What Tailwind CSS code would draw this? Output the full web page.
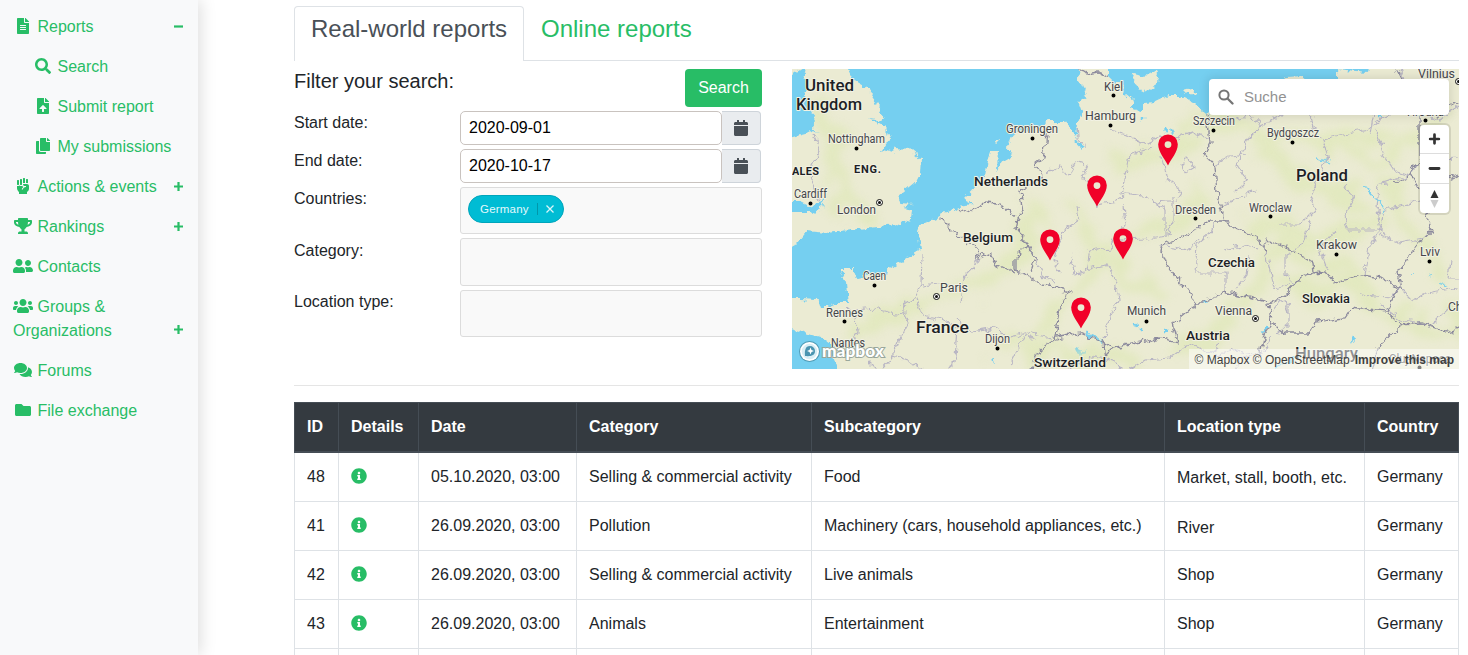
<!DOCTYPE html>
<html lang="en">
<head>
<meta charset="utf-8">
<title>Reports</title>
<script src="https://cdn.jsdelivr.net/npm/@tailwindcss/browser@4"></script>
</head>
<body class="h-[655px] overflow-hidden bg-white font-['Liberation_Sans',Arial,sans-serif] text-base text-[#212529]">
<svg class="absolute size-0">
  <symbol id="file" viewBox="0 0 384 512"><path d="M224 136V0H24C10.7 0 0 10.7 0 24v464c0 13.3 10.7 24 24 24h336c13.3 0 24-10.7 24-24V160H248c-13.2 0-24-10.8-24-24zm64 236c0 6.6-5.4 12-12 12H108c-6.6 0-12-5.4-12-12v-8c0-6.6 5.4-12 12-12h168c6.6 0 12 5.4 12 12v8zm0-64c0 6.6-5.4 12-12 12H108c-6.6 0-12-5.4-12-12v-8c0-6.6 5.4-12 12-12h168c6.6 0 12 5.4 12 12v8zm0-72v8c0 6.6-5.4 12-12 12H108c-6.6 0-12-5.4-12-12v-8c0-6.6 5.4-12 12-12h168c6.6 0 12 5.4 12 12zm96-114.1v6.1H256V0h6.1c6.4 0 12.5 2.5 17 7l97.9 98c4.5 4.5 7 10.6 7 16.9z"/></symbol>
  <symbol id="search" viewBox="0 0 512 512"><path d="M505 442.7L405.3 343c-4.5-4.5-10.6-7-17-7H372c27.6-35.3 44-79.7 44-128C416 93.1 322.9 0 208 0S0 93.1 0 208s93.1 208 208 208c48.3 0 92.7-16.4 128-44v16.3c0 6.4 2.5 12.5 7 17l99.7 99.7c9.4 9.4 24.6 9.4 33.9 0l28.3-28.3c9.4-9.4 9.4-24.6.1-34zM208 336c-70.7 0-128-57.2-128-128 0-70.7 57.2-128 128-128 70.7 0 128 57.2 128 128 0 70.7-57.2 128-128 128z"/></symbol>
  <symbol id="upload" viewBox="0 0 384 512"><path d="M224 136V0H24C10.7 0 0 10.7 0 24v464c0 13.3 10.7 24 24 24h336c13.3 0 24-10.7 24-24V160H248c-13.2 0-24-10.8-24-24zm65.18 216.01H224v80c0 8.84-7.16 16-16 16h-32c-8.84 0-16-7.16-16-16v-80H94.82c-14.28 0-21.41-17.29-11.27-27.36l96.42-95.7c6.65-6.61 17.39-6.61 24.04 0l96.42 95.7c10.15 10.07 3.03 27.36-11.25 27.36zM377 105L279.1 7c-4.5-4.5-10.6-7-17-7H256v128h128v-6.1c0-6.3-2.5-12.4-7-16.9z"/></symbol>
  <symbol id="copy" viewBox="0 0 448 512"><path d="M320 448v40c0 13.255-10.745 24-24 24H24c-13.255 0-24-10.745-24-24V120c0-13.255 10.745-24 24-24h72v296c0 30.879 25.121 56 56 56h168zm0-344V0H152c-13.255 0-24 10.745-24 24v368c0 13.255 10.745 24 24 24h272c13.255 0 24-10.745 24-24V128H344c-13.2 0-24-10.8-24-24zm120.971-31.029L375.029 7.029A24 24 0 0 0 358.059 0H352v96h96v-6.059a24 24 0 0 0-7.029-16.97z"/></symbol>
  <symbol id="fist" viewBox="0 0 384 512"><path d="M255.98 160V16c0-8.84-7.16-16-16-16h-32c-8.84 0-16 7.16-16 16v146.93c5.02-1.78 10.34-2.93 15.97-2.93h48.03zm128 95.99c-.01-35.34-28.66-63.99-63.99-63.99H207.85c-8.78 0-15.9 7.07-15.9 15.85v.56c0 26.27 21.3 47.59 47.57 47.59h35.26c9.68 0 13.2 3.58 13.2 8v16.2c0 4.29-3.59 7.78-7.88 8-44.52 2.28-64.16 24.71-96.05 72.55l-6.31 9.47a7.994 7.994 0 0 1-11.09 2.22l-13.31-8.88a7.994 7.994 0 0 1-2.22-11.09l6.31-9.47c15.73-23.6 30.2-43.26 47.31-58.08-17.27-5.51-31.4-18.12-38.87-34.45-6.59 3.41-13.96 5.52-21.87 5.52h-32c-12.34 0-23.49-4.81-32-12.48C71.48 251.19 60.33 256 48 256H16c-5.64 0-10.97-1.15-16-2.95v77.93c0 33.95 13.48 66.5 37.49 90.51L63.99 448v64h255.98v-63.96l35.91-35.92A96.035 96.035 0 0 0 384 344.21l-.02-88.22zm-32.01-90.09V48c0-8.84-7.16-16-16-16h-32c-8.84 0-16 7.16-16 16v112h32c11.28 0 21.94 2.31 32 5.9zM16 224h32c8.84 0 16-7.16 16-16V80c0-8.84-7.16-16-16-16H16C7.16 64 0 71.16 0 80v128c0 8.84 7.16 16 16 16zm95.99 0h32c8.84 0 16-7.16 16-16V48c0-8.84-7.16-16-16-16h-32c-8.84 0-16 7.16-16 16v160c0 8.84 7.16 16 16 16z"/></symbol>
  <symbol id="trophy" viewBox="0 0 576 512"><path d="M552 64H448V24c0-13.3-10.7-24-24-24H152c-13.3 0-24 10.7-24 24v40H24C10.7 64 0 74.7 0 88v56c0 35.7 22.5 72.4 61.9 100.7 31.5 22.7 69.8 37.1 110 41.7C203.3 338.5 240 360 240 360v72h-48c-35.3 0-64 20.7-64 56v12c0 6.6 5.4 12 12 12h296c6.6 0 12-5.4 12-12v-12c0-35.3-28.7-56-64-56h-48v-72s36.7-21.5 68.1-73.6c40.3-4.6 78.6-19 110-41.7 39.3-28.3 61.9-65 61.9-100.7V88c0-13.3-10.7-24-24-24zM99.3 192.8C74.9 175.2 64 155.6 64 144v-16h64.2c1 32.6 5.8 61.2 12.8 86.2-15.1-5.2-29.2-12.4-41.7-21.4zM512 144c0 16.1-17.7 36.1-35.3 48.8-12.5 9-26.7 16.2-41.8 21.4 7-25 11.8-53.6 12.8-86.2H512v16z"/></symbol>
  <symbol id="friends" viewBox="0 0 640 512"><path d="M192 256c61.9 0 112-50.1 112-112S253.9 32 192 32 80 82.1 80 144s50.1 112 112 112zm76.8 32h-8.3c-20.8 10-43.9 16-68.5 16s-47.6-6-68.5-16h-8.3C51.6 288 0 339.6 0 403.2V432c0 26.5 21.5 48 48 48h288c26.5 0 48-21.5 48-48v-28.8c0-63.6-51.6-115.2-115.2-115.2zM480 256c53 0 96-43 96-96s-43-96-96-96-96 43-96 96 43 96 96 96zm48 32h-3.8c-13.9 4.8-28.6 8-44.2 8s-30.3-3.2-44.2-8H432c-20.4 0-39.2 5.9-55.7 15.4 24.4 26.3 39.7 61.2 39.7 99.8v38.4c0 2.2-.5 4.3-.6 6.4H592c26.5 0 48-21.5 48-48 0-61.9-50.1-112-112-112z"/></symbol>
  <symbol id="users" viewBox="0 0 640 512"><path d="M96 224c35.3 0 64-28.7 64-64s-28.7-64-64-64-64 28.7-64 64 28.7 64 64 64zm448 0c35.3 0 64-28.7 64-64s-28.7-64-64-64-64 28.7-64 64 28.7 64 64 64zm32 32h-64c-17.6 0-33.5 7.1-45.1 18.6 40.3 22.1 68.9 62 75.1 109.4h66c17.7 0 32-14.3 32-32v-32c0-35.3-28.7-64-64-64zm-256 0c61.9 0 112-50.1 112-112S381.9 32 320 32 208 82.1 208 144s50.1 112 112 112zm76.8 32h-8.3c-20.8 10-43.9 16-68.5 16s-47.6-6-68.5-16h-8.3C179.6 288 128 339.6 128 403.2V432c0 26.5 21.5 48 48 48h288c26.5 0 48-21.5 48-48v-28.8c0-63.6-51.6-115.2-115.2-115.2zm-223.7-13.4C161.5 263.1 145.6 256 128 256H64c-35.3 0-64 28.7-64 64v32c0 17.7 14.3 32 32 32h65.9c6.3-47.4 34.9-87.3 75.2-109.4z"/></symbol>
  <symbol id="comments" viewBox="0 0 576 512"><path d="M416 192c0-88.4-93.1-160-208-160S0 103.6 0 192c0 34.3 14.1 65.9 38 92-13.4 30.2-35.5 54.2-35.8 54.5-2.2 2.3-2.8 5.7-1.5 8.7S4.8 352 8 352c36.6 0 66.9-12.3 88.7-25 32.2 15.7 70.3 25 111.3 25 114.9 0 208-71.6 208-160zm122 220c23.9-26 38-57.7 38-92 0-66.9-53.5-124.2-129.3-148.1.9 6.6 1.3 13.3 1.3 20.1 0 105.9-107.7 192-240 192-10.8 0-21.3-.8-31.7-1.9C207.8 439.6 281.8 480 368 480c41 0 79.1-9.2 111.3-25 21.8 12.7 52.1 25 88.7 25 3.2 0 6.1-1.9 7.3-4.8 1.3-2.9.7-6.3-1.5-8.7-.3-.3-22.4-24.2-35.8-54.5z"/></symbol>
  <symbol id="folder" viewBox="0 0 512 512"><path d="M464 128H272l-64-64H48C21.49 64 0 85.49 0 112v288c0 26.51 21.49 48 48 48h416c26.51 0 48-21.49 48-48V176c0-26.51-21.49-48-48-48z"/></symbol>
  <symbol id="calendar" viewBox="0 0 448 512"><path d="M12 192h424c6.6 0 12 5.4 12 12v260c0 26.5-21.5 48-48 48H48c-26.5 0-48-21.5-48-48V204c0-6.6 5.4-12 12-12zm436-44v-36c0-26.5-21.5-48-48-48h-48V12c0-6.6-5.4-12-12-12h-40c-6.6 0-12 5.4-12 12v52H160V12c0-6.6-5.4-12-12-12h-40c-6.6 0-12 5.4-12 12v52H48C21.5 64 0 85.5 0 112v36c0 6.6 5.4 12 12 12h424c6.6 0 12-5.4 12-12z"/></symbol>
  <symbol id="info" viewBox="0 0 512 512"><path d="M256 8C119.043 8 8 119.083 8 256c0 136.997 111.043 248 248 248s248-111.003 248-248C504 119.083 392.957 8 256 8zm0 110c23.196 0 42 18.804 42 42s-18.804 42-42 42-42-18.804-42-42 18.804-42 42-42zm56 254c0 6.627-5.373 12-12 12h-88c-6.627 0-12-5.373-12-12v-24c0-6.627 5.373-12 12-12h12v-64h-12c-6.627 0-12-5.373-12-12v-24c0-6.627 5.373-12 12-12h64c6.627 0 12 5.373 12 12v100h12c6.627 0 12 5.373 12 12v24z"/></symbol>
  <symbol id="plus" viewBox="0 0 9 9"><path d="M3.400 0h2.200v3.400H9v2.200H5.600V9H3.400V5.600H0V3.400h3.400z"/></symbol>
  <symbol id="minus" viewBox="0 0 9 9"><path d="M0 3.400h9v2.200H0z"/></symbol>
</svg>

<div class="flex h-full overflow-hidden">
  <aside class="w-[198px] shrink-0 bg-[#f8f9fa] pt-[7px] text-[#28bd66] shadow-[3px_0_15px_rgba(0,0,0,0.13)]">
    <nav class="[&_a]:flex [&_a]:items-center [&_a]:px-[13px] [&_a]:py-2 [&_a]:leading-6 [&_a>svg]:mb-0.5 [&_a>svg:first-child]:mr-[4.5px] [&_a>svg:first-child]:h-4 [&_a>svg:first-child]:w-5 [&_svg]:fill-current">
      <a><svg><use href="#file"/></svg>Reports<svg class="ml-auto mr-0.5 size-[9px]"><use href="#minus"/></svg></a>
      <div class="pl-5">
        <a><svg><use href="#search"/></svg>Search</a>
        <a><svg><use href="#upload"/></svg>Submit report</a>
        <a><svg><use href="#copy"/></svg><span class="whitespace-nowrap">My submissions</span></a>
      </div>
      <a><svg><use href="#fist"/></svg>Actions &amp; events<svg class="ml-auto mr-0.5 size-[9px]"><use href="#plus"/></svg></a>
      <a><svg><use href="#trophy"/></svg>Rankings<svg class="ml-auto mr-0.5 size-[9px]"><use href="#plus"/></svg></a>
      <a><svg><use href="#friends"/></svg>Contacts</a>
      <div class="flex items-end px-[13px] py-2 leading-6">
        <span class="w-[120px]"><svg class="-mt-1 mr-[4.5px] inline h-4 w-5"><use href="#users"/></svg>Groups &amp; Organizations</span>
        <svg class="mb-[9px] ml-auto mr-0.5 size-[9px]"><use href="#plus"/></svg>
      </div>
      <a><svg><use href="#comments"/></svg>Forums</a>
      <a><svg><use href="#folder"/></svg>File exchange</a>
    </nav>
  </aside>

  <main class="ml-24 w-[1165px] shrink-0 pt-1.5">
    <div class="flex h-[55px] border-b border-[#dee2e6] text-2xl leading-[29px]">
      <div class="-mb-px w-[230px] whitespace-nowrap rounded-t border border-b-0 border-[#dee2e6] bg-white pl-4 pt-[7px] text-[#495057]">Real-world reports</div>
      <div class="px-[17px] py-2 text-[#28bd66]">Online reports</div>
    </div>

    <div class="mt-2 flex h-[300px] justify-between">
      <form class="w-[468px]">
        <div class="flex h-[42px] justify-between">
          <h5 class="text-xl leading-6">Filter your search:</h5>
          <button type="button" class="h-[38px] w-[77px] rounded bg-[#28bd66] text-white">Search</button>
        </div>
        <div class="flex h-[38px] justify-between">
          <label class="leading-6">Start date:</label>
          <div class="flex h-[34px] w-[302px]">
            <div class="w-[262px] rounded-[5px] border border-[#c9c3bf] bg-white pl-2 leading-8 text-black">2020-09-01</div>
            <div class="flex w-[39px] items-center justify-center rounded-r border border-l-0 border-[#ced4da] bg-[#e9ecef]"><svg class="h-4 w-3.5 fill-[#495057]"><use href="#calendar"/></svg></div>
          </div>
        </div>
        <div class="flex h-[38px] justify-between">
          <label class="leading-6">End date:</label>
          <div class="flex h-[34px] w-[302px]">
            <div class="w-[262px] rounded-[5px] border border-[#c9c3bf] bg-white pl-2 leading-8 text-black">2020-10-17</div>
            <div class="flex w-[39px] items-center justify-center rounded-r border border-l-0 border-[#ced4da] bg-[#e9ecef]"><svg class="h-4 w-3.5 fill-[#495057]"><use href="#calendar"/></svg></div>
          </div>
        </div>
        <div class="flex h-[51px] justify-between">
          <label class="leading-6">Countries:</label>
          <div class="h-[47px] w-[302px] rounded-[3px] border border-[#dcdcdc] bg-[#f9f9f9] p-[7px]">
            <div class="flex h-7 w-24 items-center rounded-full border border-[#00a5bb] bg-[#00bcd4] pl-[11px] text-[11.5px] text-[#e3f9fc]"><span class="w-[50px] pt-px tracking-[0.2px]">Germany</span><span class="ml-[7px] h-3 w-px bg-[#0097aa]"></span><svg class="ml-2 size-2" viewBox="0 0 8 8" stroke="#d8f5f9" stroke-width="1.3"><path d="M.5.5l7 7M7.500.5l-7 7"/></svg></div>
          </div>
        </div>
        <div class="flex h-[52px] justify-between">
          <label class="pt-px leading-6">Category:</label>
          <div class="h-12 w-[302px] rounded-[3px] border border-[#dcdcdc] bg-[#f9f9f9]"></div>
        </div>
        <div class="flex justify-between">
          <label class="leading-6">Location type:</label>
          <div class="h-[47px] w-[302px] rounded-[3px] border border-[#dcdcdc] bg-[#f9f9f9]"></div>
        </div>
      </form>

      <div class="relative h-[300px] w-[667px] overflow-hidden bg-[#75cff0]">
        <svg class="block h-[300px] w-[667px]" viewBox="792 69 667 300">
          <defs>
            <filter id="rough" x="780" y="55" width="690" height="330" filterUnits="userSpaceOnUse" color-interpolation-filters="sRGB"><feTurbulence type="fractalNoise" baseFrequency="0.13" numOctaves="3" seed="4"/><feDisplacementMap in="SourceGraphic" scale="9" xChannelSelector="R" yChannelSelector="G"/></filter>
            <filter id="soft" x="780" y="55" width="690" height="330" filterUnits="userSpaceOnUse" color-interpolation-filters="sRGB"><feTurbulence type="fractalNoise" baseFrequency="0.03" numOctaves="3" seed="9"/><feDisplacementMap in="SourceGraphic" scale="50" xChannelSelector="R" yChannelSelector="G" result="d"/><feGaussianBlur in="d" stdDeviation="4"/></filter>
            <clipPath id="land"><use href="#britain"/><use href="#continent"/></clipPath>
          </defs>
          <g filter="url(#rough)">
            <g fill="#ebebd3">
              <path id="britain" d="M785 60L848 60 848 69 853 80 867 88 875 100 879 110 884 121 870 119 880 124 888 132 890 139 883 150 893 153 896 148 910 149 921 158 920 173 915 183 898 197 901 203 913 204 903 207 914 209 913 219 897 225 868 228 850 230 828 233 807 231 800 240 795 247 785 245 785 213 812 213 822 207 825 197 820 202 810 207 800 202 785 202 785 138 812 131 818 135 813 130 815 115 805 95 807 83 802 80 806 66 785 80Z"/>
              <path id="continent" d="M780 298L800 298 817 299 820 308 828 308 835 303 849 303 847 283 840 268 853 268 857 278 875 274 887 277 888 270 908 257 920 250 918 235 920 225 937 218 948 212 958 207 975 205 963 199 967 195 978 182 985 177 988 160 992 149 998 149 997 170 1003 162 1012 157 1007 146 1015 134 1030 129 1047 122 1065 122 1073 132 1076 140 1077 123 1082 113 1078 102 1087 97 1080 80 1075 55 1108 55 1108 77 1125 93 1133 100 1130 108 1143 112 1143 103 1153 102 1168 95 1180 95 1193 102 1207 115 1222 104 1250 88 1287 77 1302 76 1310 83 1337 83 1337 70 1367 73 1370 55 1470 55 1470 380 840 380 833 358 838 350 833 345 822 338 802 332 780 326Z"/>
              <path d="M1133 74l8 2 9-1 8-5 2 4-5 12-8 6-8-4-7-8zM1183 90l8-2 5 6-7 2zM1116 82l7 3-2 6-6-4zM995 142l5-3-1 4z"/>
            </g>
            <g fill="none" stroke="#75cff0" stroke-width="2.500">
              <path d="M1165 128l2 3M1171 130l2 3M1143 118v3M1136 323l1 4M1141 328v4M1165 331h3M1203 302l4 2M1266 327l-3 6M1354 337l-3 6M1377 117h4M1077 142l7 6"/>
              <path stroke-width="3" d="M1087 334l8 3 7 6M1077 348l3 5 6-1"/>
              <path stroke-width="1.500" d="M1318 159l13 4M1365 187l9 10 9 8-2 8M1411 273h2M1428 274l3 2M1440 284l5 2M1275 368l13-6 12-7M993 358l1 5"/>
            </g>
          </g>
          <g clip-path="url(#land)">
            <g filter="url(#soft)" fill="none" stroke="#dfe8b8" stroke-width="16" opacity=".7">
              <path d="M820 105q20 30 15 70t40 40M990 340q40 20 70-30t60-60 90-60M1110 160q60 10 80-30t80 20 90 50M1250 150q60-30 100 0t90-40M1180 350q60-30 80-80t120 30 80 0M1390 180q20 60 60 90M860 330q60-30 120-50t50-80M1020 365q60-20 120 0M1240 220q60 30 140 0M1300 130q50 20 90 0M1070 200q30 80 100 90M1270 290q70 0 120 5"/>
            </g>
            <g filter="url(#rough)" fill="none" stroke="#b9b6c4" stroke-width="1.200">
              <path d="M813 135l7 15-8 15-2 15 10 20M1077 123l1 16 8 4v6M1047 175l13-10 8 10 8-14 12 4-5 12 12 15 2 15M1097 205l20-4 10-8 20 4 12 8 7 5v25M1110 130l20 5 10 10 20-10 10 5 22-8 18 8M1130 155l-5 25-3 15M1130 155l24-8M1162 155l5 25 15 12-5 8-20 2M1180 165l6-6 9 8-8 5-5-2zM1215 165l14-8 18-2M1223 205l20-10 15-5M1077 205l2 15-15 10-10 30 5 12M1070 255l5 20 10-2 5-22 20-3 3-8 12-15-2-20M1085 270l22-5 8 15 3 20-8 15-6 25M1117 240l30-1 20-3 5-15 0-25M1028 245l15 30 12 8M922 255l-1 30-5 12-15 10 8 14-10 20-6 15-10 12M850 345l8-12-2-15-10-10M855 310l20-2 20 6 12-1M916 297l8 18 20 5 13 8-2 30-5 12M961 303l3-25 10-10 4-12M922 285l18-2 20 5M957 320l15 12 25-4 10 10 20-5 25 5M893 355l15 5 15 10M868 361l10 10"/>
              <path d="M1195 275l2-30 12-10 5-12M1197 273l28 0v20M1225 250l20-5 12 5M1160 245l30 5 8-12M1247 115l15 10-15 15-10 25 10 15-12 12M1262 125l20-10 8-15 20 15 5 20 8 5M1315 115l10-10 25-5 25 5-5 30M1323 140l20-6 25-5 10-8 30-15 15-15M1323 140l5 15-8 20-10 20 5 15-15 15-20 0M1376 130l8 25 10 15 15 5M1409 175l-30 10-2 25 3 20-10 15-5 30M1345 185l8 15-8 15 3 15 30 0 10 5M1310 220l-5 20-10 10-10 5 0 20 10 10M1265 250l5 20 5 20 15-5M1235 290l12-15 3-20M1328 270l-8-20 15-20M1380 235l20 8 25-5M1402 290l10 10 20-8 27-5M1285 300l3 15 0 10-12 8M1360 295l30 2 10-10M1272 310l8-10 8 5 0 25M1380 230l4-20 40-10M1459 280l-10 0 2-20M1247 115l-15 5M1420 110l20 10 19-15M1409 175l15-20M1425 160l34-2M1400 70l5 15-10 12"/>
              <path d="M1060 375l15-10 20-8 20 5 10 10 20-12 25-2 20-15 20 10 10-8M1215 355l20-5 20 5M1010 365l15-30 10 5M1235 369l5-10 22-5 10-18M1380 305l22 15 30 5 20-20"/>
            </g>
            <g filter="url(#rough)" fill="none" stroke="#8c8a9d" stroke-width="1.300">
              <path d="M940 218l12 12 10 8 15 10 1 9 12-5 7 13 18 8M958 208l12 5 15-10 13 1 17 13M1047 135l-4 22-8 6 8 14-23 13 3 17-6 13-2 8 13 17-13 13 0 12 12 5 16 10 27 7-10 16-5 30-15 12-10 20M1028 245l7 15-4 12M1056 338l24-5 23 9 10 6 27-6 20-4 18 4-5-19 24-20-30-38-7-18 32-14 18-13 13 0 12 8 20 7 10 15 3-10 19 7 25 15 1 11 12-1 10 11 27-8 20 3 20 12-4-18 20-27 14-15-5-15-7-25-10-18 10-12 0-45 5-5M1207 112l3 31-5 10 10 14 2 26 6 17 2 12M1312 273l-10 4-17 18-17 10 4 17 13 11 25 0 5-11 30-4 7-10 35 4 15 13-24 23-6 25M1387 312l10-24M1402 325l20-2 30 10 8-8M1203 303l20-11 12 2 33 8M1197 303l6 0M1272 322l-8 12-4 20M1075 66l12 8 12-2 12 6M1410 175l-15 8M1103 342l2 20M1113 348l-10 10M1397 69l5 10 0 12M1459 102l-10 5-12 10M1445 180l14-6"/>
            </g>
          </g>
          <g font-family="Roboto, 'Open Sans', sans-serif" fill="#45464b" stroke="#f2f2e3" stroke-width="2" stroke-linejoin="round" paint-order="stroke" font-size="12">
            <g font-weight="500" fill="#1d1f26" font-size="13">
              <text x="805" y="91" font-size="17" textLength="49" lengthAdjust="spacingAndGlyphs">United</text>
              <text x="796" y="110" font-size="17" textLength="66" lengthAdjust="spacingAndGlyphs">Kingdom</text>
              <text x="792" y="175" font-size="11" font-weight="700" textLength="27">ALES</text>
              <text x="854" y="173" font-size="11" font-weight="700" textLength="27">ENG.</text>
              <text x="974" y="186" textLength="74" lengthAdjust="spacingAndGlyphs">Netherlands</text>
              <text x="963" y="242" textLength="50" lengthAdjust="spacingAndGlyphs">Belgium</text>
              <text x="916" y="333" font-size="17" textLength="53" lengthAdjust="spacingAndGlyphs">France</text>
              <text x="1296" y="181" font-size="17" textLength="52" lengthAdjust="spacingAndGlyphs">Poland</text>
              <text x="1208" y="267" textLength="47" lengthAdjust="spacingAndGlyphs">Czechia</text>
              <text x="1302" y="303" textLength="48" lengthAdjust="spacingAndGlyphs">Slovakia</text>
              <text x="1186" y="340" textLength="44" lengthAdjust="spacingAndGlyphs">Austria</text>
              <text x="1034" y="367" textLength="72" lengthAdjust="spacingAndGlyphs">Switzerland</text>
              <text x="1295" y="359" font-size="17" textLength="63" lengthAdjust="spacingAndGlyphs">Hungary</text>
            </g>
            <text x="828" y="143" textLength="57" lengthAdjust="spacingAndGlyphs">Nottingham</text>
            <text x="794" y="198" textLength="33" lengthAdjust="spacingAndGlyphs">Cardiff</text>
            <text x="837" y="214" textLength="39" lengthAdjust="spacingAndGlyphs">London</text>
            <text x="863" y="280" textLength="23" lengthAdjust="spacingAndGlyphs">Caen</text>
            <text x="940" y="292" textLength="28" lengthAdjust="spacingAndGlyphs">Paris</text>
            <text x="826" y="317" textLength="37" lengthAdjust="spacingAndGlyphs">Rennes</text>
            <text x="831" y="347" textLength="34" lengthAdjust="spacingAndGlyphs">Nantes</text>
            <text x="985" y="343" textLength="25" lengthAdjust="spacingAndGlyphs">Dijon</text>
            <text x="1006" y="133" textLength="52" lengthAdjust="spacingAndGlyphs">Groningen</text>
            <text x="1104" y="91" textLength="19" lengthAdjust="spacingAndGlyphs">Kiel</text>
            <text x="1085" y="120" textLength="51" lengthAdjust="spacingAndGlyphs">Hamburg</text>
            <text x="1193" y="125" textLength="42" lengthAdjust="spacingAndGlyphs">Szczecin</text>
            <text x="1267" y="137" textLength="52" lengthAdjust="spacingAndGlyphs">Bydgoszcz</text>
            <text x="1418" y="78" textLength="37" lengthAdjust="spacingAndGlyphs">Vilnius</text>
            <text x="1407" y="116" textLength="37" lengthAdjust="spacingAndGlyphs">Hrodna</text>
            <text x="1175" y="214" textLength="41" lengthAdjust="spacingAndGlyphs">Dresden</text>
            <text x="1249" y="212" textLength="43" lengthAdjust="spacingAndGlyphs">Wroclaw</text>
            <text x="1127" y="315" textLength="39" lengthAdjust="spacingAndGlyphs">Munich</text>
            <text x="1215" y="315" textLength="37" lengthAdjust="spacingAndGlyphs">Vienna</text>
            <text x="1316" y="249" textLength="41" lengthAdjust="spacingAndGlyphs">Krakow</text>
            <text x="1420" y="256" textLength="20" lengthAdjust="spacingAndGlyphs">Lviv</text>
            <text x="1448" y="311">Ch</text>
            <text x="1389" y="363" textLength="62" lengthAdjust="spacingAndGlyphs">Cluj-Napoca</text>
          </g>
          <path fill="none" stroke="#000" stroke-width="4" stroke-linecap="round" d="M856.500 148.500h0M810.500 203.500h0M874.500 285.500h0M844.500 321.500h0M847 352.500h0M997.500 348.500h0M1032.500 138.500h0M1113.500 95.500h0M1110.500 125.500h0M1213.500 130.500h0M1292.500 142.500h0M1425.500 120.500h0M1195.500 218.500h0M1270.500 216.500h0M1146.500 321.500h0M1336.500 254.500h0M1429.500 261.500h0M1419.500 367.500h0"/>
          <g fill="#fff" stroke="#111" stroke-width="1"><circle cx="879.500" cy="202.500" r="3"/><circle cx="936.500" cy="296.500" r="3"/><circle cx="1255.500" cy="318.500" r="3"/><circle cx="1458.500" cy="81.500" r="3"/></g>
          <path stroke="#111" stroke-width="3" stroke-linecap="round" d="M879.500 202.500h0M936.500 296.500h0M1255.500 318.500h0M1458.500 81.500h0"/>
          <g fill="#f10129" fill-rule="evenodd">
            <path id="pin" d="M1168 165.500C1165 159 1158.200 152 1158.200 144.200a9.800 9.800 0 0 1 19.600 0C1177.800 152 1171 159 1168 165.500zM1168 148a3.400 3.400 0 1 0 0-6.800 3.400 3.400 0 0 0 0 6.800z"/>
            <use href="#pin" x="-71" y="41"/><use href="#pin" x="-118" y="95"/><use href="#pin" x="-45" y="94"/><use href="#pin" x="-87" y="163"/>
          </g>
          <g fill="#fff">
            <circle cx="809.500" cy="351.500" r="10.500" fill="#4f9bb5"/>
            <circle cx="809.500" cy="351.500" r="9.500"/><circle cx="809.500" cy="351.500" r="7.800" fill="#d9eef5"/>
            <path fill="#4a94b0" d="M805 356c-.5-5 0-10 5-10a5 5 0 0 1 5 5c0 5-5 5.500-10 5z"/><path d="M810.500 347.500l1 2.500 2.500 1-2.500 1-1 2.500-1-2.500-2.500-1 2.500-1z"/>
            <text x="822" y="357" font-family="Lato, Roboto, sans-serif" font-weight="900" font-size="17" stroke="#9aa79b" stroke-width="2" paint-order="stroke" textLength="62" lengthAdjust="spacingAndGlyphs">mapbox</text>
          </g>
        </svg>
        <div class="absolute right-2.5 top-2.5 flex h-9 w-60 items-center rounded bg-white pl-[9px] text-[15px] text-[#929292] shadow-[0_0_10px_2px_rgba(0,0,0,0.1)]">
          <svg class="mr-[10px] size-4 fill-none stroke-[#757575]" viewBox="0 0 16 16"><circle cx="6" cy="6" r="4.600" stroke-width="2"/><path d="M9.500 9.500l5 5" stroke-width="2.300" stroke-linecap="round"/></svg>Suche
        </div>
        <div class="absolute right-2.5 top-[56px] flex h-[88px] w-[29px] flex-col divide-y divide-[#ddd] rounded bg-white shadow-[0_0_0_2px_rgba(0,0,0,0.1)]">
          <svg viewBox="0 0 29 29" class="h-[29px]" stroke="#333" stroke-width="2.800" stroke-linecap="round"><path d="M10 14.500h9M14.500 10v9"/></svg>
          <svg viewBox="0 0 29 29" class="h-[30px]" stroke="#333" stroke-width="2.800" stroke-linecap="round"><path d="M10 14.500h9"/></svg>
          <svg viewBox="0 0 29 29" class="h-[29px]"><path fill="#333" d="M10.500 14l4-8 4 8z"/><path fill="#ccc" d="M10.500 16l4 8 4-8z"/></svg>
        </div>
        <div class="absolute bottom-0 right-0 flex h-5 w-[270px] items-center justify-end gap-[5px] whitespace-nowrap bg-white/50 pr-[5px] pt-px text-[12px] text-[#404040]"><span>© Mapbox © OpenStreetMap</span><b>Improve this map</b></div>
      </div>
    </div>

    <hr class="mt-4 border-[#e5e5e5]">

    <table class="mt-4 w-[1165px] table-fixed border-collapse text-left leading-6 [&_svg]:-mt-0.5 [&_td]:border [&_td]:border-[#dee2e6] [&_td]:p-3 [&_th]:border [&_th]:border-b-2 [&_th]:border-[#454d55] [&_th]:p-3 [&_tr]:whitespace-nowrap">
      <colgroup><col class="w-[44px]"><col class="w-[80px]"><col class="w-[158px]"><col class="w-[235px]"><col class="w-[353px]"><col class="w-[200px]"><col class="w-[94px]"></colgroup>
      <thead class="bg-[#343a40] text-white"><tr><th>ID</th><th>Details</th><th>Date</th><th>Category</th><th>Subcategory</th><th>Location type</th><th>Country</th></tr></thead>
      <tbody>
        <tr><td>48</td><td><svg class="size-4 fill-[#28bd66]"><use href="#info"/></svg></td><td>05.10.2020, 03:00</td><td>Selling &amp; commercial activity</td><td>Food</td><td><span class="relative top-px">Market, stall, booth, etc.</span></td><td>Germany</td></tr>
        <tr><td>41</td><td><svg class="size-4 fill-[#28bd66]"><use href="#info"/></svg></td><td>26.09.2020, 03:00</td><td>Pollution</td><td>Machinery (cars, household appliances, etc.)</td><td><span class="relative top-0.5">River</span></td><td>Germany</td></tr>
        <tr><td>42</td><td><svg class="size-4 fill-[#28bd66]"><use href="#info"/></svg></td><td>26.09.2020, 03:00</td><td>Selling &amp; commercial activity</td><td>Live animals</td><td>Shop</td><td>Germany</td></tr>
        <tr><td>43</td><td><svg class="size-4 fill-[#28bd66]"><use href="#info"/></svg></td><td>26.09.2020, 03:00</td><td>Animals</td><td>Entertainment</td><td>Shop</td><td>Germany</td></tr>
        <tr><td>&nbsp;</td><td></td><td></td><td></td><td></td><td></td><td></td></tr>
      </tbody>
    </table>
  </main>
</div>
</body>
</html>
